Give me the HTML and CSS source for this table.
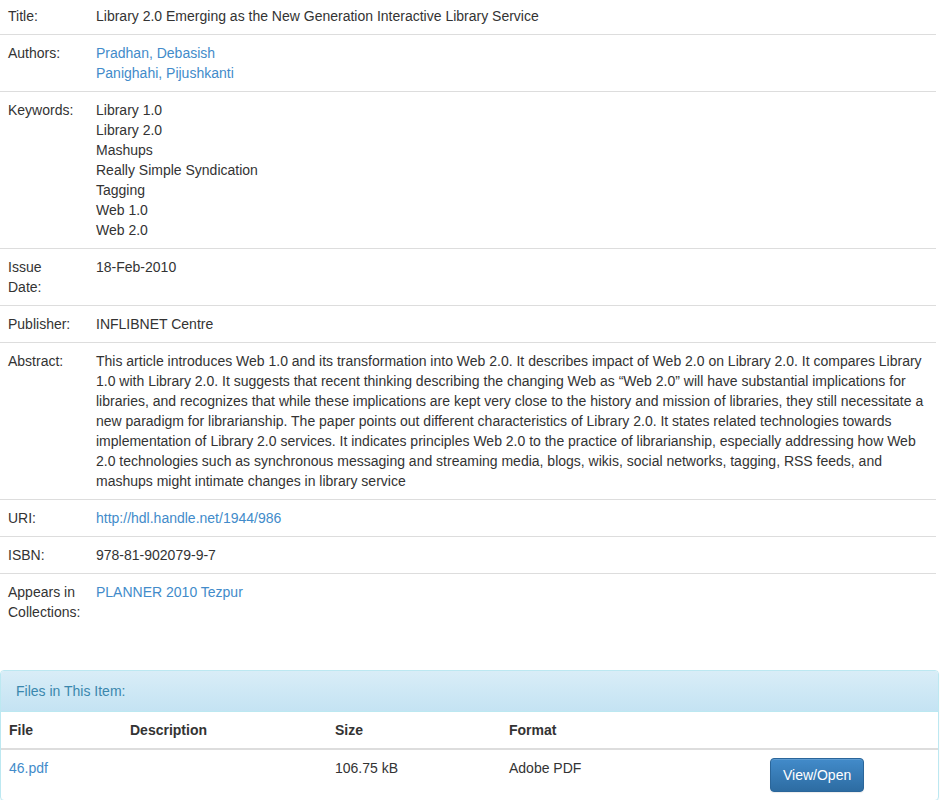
FILE: index.html
```html
<!DOCTYPE html>
<html>
<head>
<meta charset="utf-8">
<title>Library 2.0 Emerging as the New Generation Interactive Library Service</title>
<link rel="stylesheet" href="styles.css">
</head>
<body>
<table class="meta">
  <colgroup><col class="label-col"><col></colgroup>
  <tr class="first"><td class="label">Title:</td><td class="value">Library 2.0 Emerging as the New Generation Interactive Library Service</td></tr>
  <tr><td class="label">Authors:</td><td class="value"><a href="#">Pradhan, Debasish</a><br><a href="#">Panighahi, Pijushkanti</a></td></tr>
  <tr><td class="label">Keywords:</td><td class="value">Library 1.0<br>Library 2.0<br>Mashups<br>Really Simple Syndication<br>Tagging<br>Web 1.0<br>Web 2.0</td></tr>
  <tr><td class="label">Issue Date:</td><td class="value">18-Feb-2010</td></tr>
  <tr><td class="label">Publisher:</td><td class="value">INFLIBNET Centre</td></tr>
  <tr><td class="label">Abstract:</td><td class="value">This article introduces Web 1.0 and its transformation into Web 2.0. It describes impact of Web 2.0 on Library 2.0. It compares Library 1.0 with Library 2.0. It suggests that recent thinking describing the changing Web as “Web 2.0” will have substantial implications for libraries, and recognizes that while these implications are kept very close to the history and mission of libraries, they still necessitate a new paradigm for librarianship. The paper points out different characteristics of Library 2.0. It states related technologies towards implementation of Library 2.0 services. It indicates principles Web 2.0 to the practice of librarianship, especially addressing how Web 2.0 technologies such as synchronous messaging and streaming media, blogs, wikis, social networks, tagging, RSS feeds, and mashups might intimate changes in library service</td></tr>
  <tr><td class="label">URI:</td><td class="value"><a href="#">http://hdl.handle.net/1944/986</a></td></tr>
  <tr><td class="label">ISBN:</td><td class="value">978-81-902079-9-7</td></tr>
  <tr><td class="label">Appears in Collections:</td><td class="value"><a href="#">PLANNER 2010 Tezpur</a></td></tr>
</table>

<div class="panel">
  <div class="panel-heading">Files in This Item:</div>
  <table class="files">
    <tr>
      <th class="c1">File</th>
      <th class="c2">Description</th>
      <th class="c3">Size</th>
      <th class="c4">Format</th>
      <th class="c5"></th>
    </tr>
    <tr>
      <td><a href="#">46.pdf</a></td>
      <td></td>
      <td>106.75 kB</td>
      <td>Adobe PDF</td>
      <td><a class="btn" href="#">View/Open</a></td>
    </tr>
  </table>
</div>
</body>
</html>
```

FILE: styles.css
```css
html, body {
  margin: 0;
  padding: 0;
  background: #fff;
}
body {
  font-family: "Liberation Sans", Arial, Helvetica, sans-serif;
  font-size: 14px;
  line-height: 20px;
  color: #333;
}
a {
  color: #428bca;
  text-decoration: none;
}
table {
  border-collapse: collapse;
  border-spacing: 0;
}
.meta {
  width: 936px;
  margin-bottom: 40px;
  table-layout: fixed;
}
.meta .label-col {
  width: 88px;
}
.meta td {
  padding: 8px;
  border-top: 1px solid #ddd;
  vertical-align: top;
  text-align: left;
}
.meta tr.first td {
  border-top: 0;
  padding-top: 6px;
}
.meta .label {
  padding-right: 12px;
  overflow: visible;
}
.panel {
  width: 937px;
  border: 1px solid #bce8f1;
  border-radius: 4px;
  box-shadow: 0 1px 2px rgba(0, 0, 0, 0.05);
  overflow: hidden;
}
.panel-heading {
  padding: 10px 15px;
  color: #3a87ad;
  background-image: linear-gradient(to bottom, #d9edf7 0, #c4e3f3 100%);
  border-bottom: 1px solid #bce8f1;
}
.files {
  width: 100%;
}
.files th,
.files td {
  padding: 8px;
  text-align: left;
  vertical-align: top;
}
.files th {
  font-weight: bold;
  border-bottom: 2px solid #ddd;
}
.files .c1 { width: 105px; }
.files .c2 { width: 189px; }
.files .c3 { width: 158px; }
.files .c4 { width: 245px; }
.btn {
  display: inline-block;
  padding: 6px 12px;
  line-height: 20px;
  color: #fff;
  border: 1px solid #2b669a;
  border-radius: 4px;
  background-image: linear-gradient(to bottom, #428bca 0, #2d6ca2 100%);
  box-shadow: inset 0 1px 0 rgba(255, 255, 255, 0.15), 0 1px 1px rgba(0, 0, 0, 0.075);
}
```
